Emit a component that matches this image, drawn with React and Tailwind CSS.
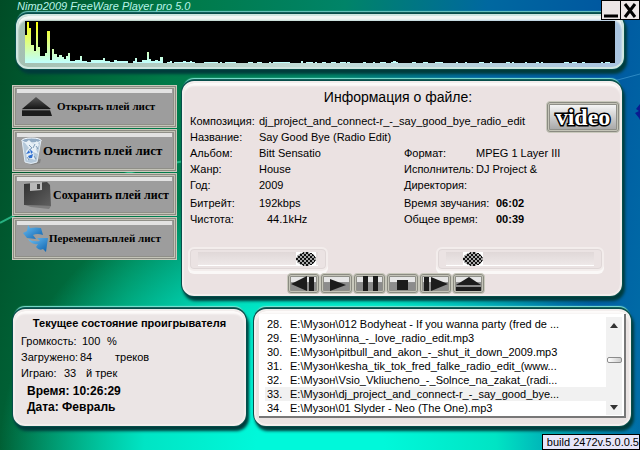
// src/App.jsx
// Nimp2009 audio player skin: spectrum, playlist actions, file info, status and playlist.

import React, { useState } from 'react';

// Spectrum runs as [x, width, height] in pixels of the 590x42 display
const spectrum = [
  [0, 2, 28], [2, 2, 41], [4, 2, 35], [6, 3, 18], [9, 2, 12], [11, 2, 41], [13, 2, 16], [15, 5, 7],
  [20, 2, 10], [22, 3, 32], [25, 2, 3], [27, 2, 14], [29, 3, 9], [32, 2, 6], [34, 3, 8], [37, 2, 6],
  [39, 2, 4], [41, 2, 7], [43, 2, 10], [45, 5, 2], [50, 5, 3], [55, 2, 7], [57, 5, 2], [62, 4, 1],
  [66, 12, 3], [78, 2, 5], [80, 5, 2], [85, 4, 1], [89, 3, 3], [92, 11, 2], [108, 2, 2], [110, 2, 5],
  [112, 5, 1], [117, 5, 3], [122, 2, 11], [124, 2, 4], [126, 4, 2], [130, 3, 3], [133, 2, 2], [135, 3, 6],
  [142, 3, 1], [145, 2, 2], [149, 9, 1], [158, 3, 2], [161, 5, 1], [165, 2, 2], [167, 3, 1], [179, 14, 1],
  [195, 2, 1], [200, 11, 1], [223, 5, 1], [232, 5, 1], [244, 2, 1], [248, 17, 1], [276, 2, 2], [281, 7, 1],
  [290, 2, 1], [297, 4, 1], [306, 5, 1], [315, 6, 1], [322, 3, 1], [338, 3, 1], [348, 2, 1], [355, 6, 1],
  [366, 7, 1], [368, 3, 2], [387, 4, 1], [398, 5, 1], [410, 8, 1], [431, 2, 1], [440, 2, 1], [454, 5, 1],
  [465, 2, 1], [481, 4, 1], [487, 2, 1], [500, 2, 1], [511, 3, 1], [516, 2, 1], [539, 5, 1], [547, 5, 1],
  [557, 3, 1], [576, 2, 1], [580, 5, 1],
];

const trackInfo = [
  ['Композиция:', 'dj_project_and_connect-r_-_say_good_bye_radio_edit'],
  ['Название:', 'Say Good Bye (Radio Edit)'],
  ['Альбом:', 'Bitt Sensatio'],
  ['Жанр:', 'House'],
  ['Год:', '2009'],
];

const formatInfo = [
  ['Формат:', 'MPEG 1 Layer III'],
  ['Исполнитель:', 'DJ Project &'],
  ['Директория:', ''],
];

const playlist = [
  { no: 28, title: 'E:\\Музон\\012 Bodyheat - If you wanna party (fred de ...' },
  { no: 29, title: 'E:\\Музон\\inna_-_love_radio_edit.mp3' },
  { no: 30, title: 'E:\\Музон\\pitbull_and_akon_-_shut_it_down_2009.mp3' },
  { no: 31, title: 'E:\\Музон\\kesha_tik_tok_fred_falke_radio_edit_(www...' },
  { no: 32, title: 'E:\\Музон\\Vsio_Vkliucheno_-_Solnce_na_zakat_(radi...' },
  { no: 33, title: 'E:\\Музон\\dj_project_and_connect-r_-_say_good_bye...' },
  { no: 34, title: 'E:\\Музон\\01 Slyder - Neo (The One).mp3' },
];

// Glossy raised frame shared by every panel
const panelFrame =
  'rounded-xl border-2 border-[#f3eeed] shadow-[inset_0_4px_2px_-1px_#fdfbfa,0_0_0_1px_#064e4a,0_-2px_1px_0_#06504c,0_-4px_1px_-1px_#8ff5e4,2px_4px_3px_1px_#013c3c]';

// Grey double-edged frame for the buttons
const metalFrame =
  'border border-[#c9c9bc] bg-[#9d9d9d] shadow-[inset_0_0_0_1px_#8b8b82,inset_0_0_0_2px_#c4c4b8,inset_0_0_0_3px_#8f8f88]';

function EjectIcon() {
  return (
    <svg width="32" height="20" viewBox="0 0 32 20">
      <defs>
        <linearGradient id="ejectFill" x1="0" y1="0" x2="0" y2="1">
          <stop offset="0" stopColor="#555" />
          <stop offset="1" stopColor="#151515" />
        </linearGradient>
      </defs>
      <path d="M15 0 L30 12 H1 Z" fill="url(#ejectFill)" />
      <path d="M1 13 H29 L31 19 H1 Z" fill="#1c1c1c" />
      <path d="M1 13 H29" stroke="#666" />
    </svg>
  );
}

function BinIcon() {
  return (
    <svg width="22" height="28" viewBox="0 0 22 28">
      <path d="M5 25 L20 22 L19 26 L11 28 Z" fill="#6f6f6f" opacity=".6" />
      <path d="M1 3 L4 25 Q10 28 16 25 L20 3 Z" fill="#b4c8da" stroke="#e3edf5" />
      <ellipse cx="10.500" cy="3.500" rx="9.500" ry="2.500" fill="#8fa9c2" stroke="#f5faff" />
      <path d="M4 6 L8 3 L12 7 L16 4 L18 8 L15 12 L17 17 L12 15 L14 23 L8 21 L6 24 L5 14 L8 11 Z" fill="#e6eff6" />
      <path d="M8 8 L11 11 L8 13 M14 7 L12 11 M6 20 L8 23 M13 19 L15 22 M15 9 L17 12" stroke="#7d9ab6" fill="none" />
      <path d="M5 17 L8 13 L9 16 Z M9 12 L12 15 L10 17 Z M7 19 L12 17 L11 21 L8 21 Z" fill="#2f6fd0" />
    </svg>
  );
}

function FloppyIcon() {
  return (
    <svg width="30" height="28" viewBox="0 0 30 28">
      <defs>
        <linearGradient id="floppyFill" x1="0" y1="0" x2="1" y2="1">
          <stop offset="0" stopColor="#303030" />
          <stop offset="1" stopColor="#606060" />
        </linearGradient>
      </defs>
      <path d="M2 24 L28 25 L26 28 L8 26 Z" fill="#666" opacity=".6" />
      <path d="M1 3 L24 1 L27 4 L28 25 L1 24 Z" fill="url(#floppyFill)" />
      <path d="M7 2 L19 1 V9 L7 10 Z" fill="#b9b9b9" />
      <path d="M14 3 L17 3 V8 L14 8 Z" fill="#3f3f3f" />
    </svg>
  );
}

function ShuffleIcon() {
  return (
    <svg width="26" height="28" viewBox="0 0 26 28">
      <defs>
        <linearGradient id="shuffleFill" x1="0" y1="0" x2="1" y2="1">
          <stop offset="0" stopColor="#6cc0f5" />
          <stop offset="1" stopColor="#0d62ae" />
        </linearGradient>
      </defs>
      <path d="M5 0 L7 3 Q13 2 18 3 L20 10 Q14 8 10 10 L13 14 L4 13 L0 8 L4 6 Z" fill="url(#shuffleFill)" />
      <path d="M25 13 L23 27 L20 24 Q16 26 13 22 L15 19 Q8 20 5 14 Q10 17 17 16 L14 13 Z" fill="url(#shuffleFill)" />
    </svg>
  );
}

// Shapes for the transport bar, all on a 27x15 canvas
const transport = [
  { label: 'Назад', shape: <path d="M17 0 V15 L1 8 Z M19 1 H24 V15 H19 Z" /> },
  { label: 'Играть', shape: <path d="M7 3 L23 9 L7 15 Z" /> },
  { label: 'Пауза', shape: <path d="M7 0 H12 V15 H7 Z M17 0 H22 V15 H17 Z" /> },
  { label: 'Стоп', shape: <path d="M8 4 H19 V14 H8 Z" /> },
  { label: 'Вперёд', shape: <path d="M2 1 H7 V15 H2 Z M9 1 L26 8 L9 15 Z" /> },
  { label: 'Открыть', shape: <path d="M14 1 L26 9 H1 Z M1 11 H26 V15 H1 Z" /> },
];

const actions = [
  { label: 'Открыть плей лист', icon: <EjectIcon />, className: 'gap-1 pl-2 text-[11px]' },
  { label: 'Очистить плей лист', icon: <BinIcon />, className: 'pl-2 text-[13px]' },
  { label: 'Сохранить плей лист', icon: <FloppyIcon />, className: 'pl-2.5 text-xs' },
  { label: 'Перемешатьплей лист', icon: <ShuffleIcon />, className: 'pl-2.5 text-[11px]' },
];

function Slider({ label, defaultValue, className }) {
  return (
    <div className={`flex h-6 items-center rounded-md border-2 border-[#f3edec] bg-[#ebe3e3] px-2 shadow-[inset_0_0_0_1px_#dfd7d7,0_3px_0_0_#faf8f7] ${className}`}>
      <input
        type="range"
        aria-label={label}
        defaultValue={defaultValue}
        className="h-3.5 w-full appearance-none border-b border-white bg-linear-to-b from-[#e0d8d8] to-[#eee8e8] [&::-webkit-slider-thumb]:h-3.5 [&::-webkit-slider-thumb]:w-5 [&::-webkit-slider-thumb]:appearance-none [&::-webkit-slider-thumb]:bg-[radial-gradient(closest-side,transparent_96%,#fff_100%),repeating-conic-gradient(#111_0_25%,#aaa_0_50%)] [&::-webkit-slider-thumb]:bg-[length:100%_100%,4px_4px]"
      />
    </div>
  );
}

function Spectrum() {
  return (
    <section className="mx-4 rounded-xl border-2 border-[#cfe6e0] bg-linear-to-r from-[#a4c0b2] via-[#c2dcd6] to-[#a9c4e0] px-[7px] pt-[5px] pb-1 shadow-[inset_0_4px_2px_#f2f7f5,0_0_0_1px_#064e4a,0_-2px_1px_0_#06504c,0_-4px_1px_-1px_#7fd8d0,2px_4px_3px_1px_#013c3c]">
      <svg className="block h-[42px] w-full bg-black" viewBox="0 0 590 42" preserveAspectRatio="none" shapeRendering="crispEdges">
        <defs>
          <linearGradient id="levels" gradientUnits="userSpaceOnUse" x1="0" y1="0" x2="0" y2="42">
            <stop offset="0" stopColor="#ffff00" />
            <stop offset="1" stopColor="#c0ffff" />
          </linearGradient>
        </defs>
        {spectrum.map(([x, w, h]) => (
          <rect key={x} x={x} y={42 - h} width={w} height={h} fill="url(#levels)" />
        ))}
      </svg>
    </section>
  );
}

function FileInfo() {
  return (
    <section className={`flex min-w-0 flex-1 flex-col bg-[#ebe2e2] ${panelFrame}`}>
      <h2 className="mt-1 pr-2 text-center text-sm leading-5">Информация о файле:</h2>
      <div className="relative flex px-1.5 pt-1.5 text-[11px] leading-4">
        <dl className="grid w-[214px] grid-cols-[69px_1fr] content-start whitespace-nowrap">
          {trackInfo.map(([name, value]) => (
            <React.Fragment key={name}>
              <dt>{name}</dt>
              <dd>{value}</dd>
            </React.Fragment>
          ))}
          <dt className="mt-0.5">Битрейт:</dt>
          <dd className="mt-0.5">192kbps</dd>
          <dt>Чистота:</dt>
          <dd className="pl-2">44.1kHz</dd>
        </dl>
        <div className="pt-8 whitespace-nowrap">
          <dl className="grid grid-cols-[72px_1fr]">
            {formatInfo.map(([name, value]) => (
              <React.Fragment key={name}>
                <dt>{name}</dt>
                <dd>{value}</dd>
              </React.Fragment>
            ))}
          </dl>
          <dl className="mt-0.5 grid grid-cols-[92px_1fr]">
            <dt>Время звучания:</dt>
            <dd className="font-bold">06:02</dd>
            <dt>Общее время:</dt>
            <dd className="font-bold">00:39</dd>
          </dl>
        </div>
        {/* Video button floats over the right edge of the info rows */}
        <button
          type="button"
          className={`absolute -top-1.5 right-0 h-8 w-[74px] rounded-sm bg-linear-to-b from-white to-[#a0a0a0] text-center font-['Liberation_Serif',serif] text-2xl leading-6 font-bold text-white [-webkit-text-stroke:3px_#000] [paint-order:stroke_fill] ${metalFrame}`}
        >
          video
        </button>
      </div>
      <div className="mt-5 flex items-center justify-between pr-4 pl-1">
        <Slider label="Громкость" defaultValue="98" className="w-[140px]" />
        <Slider label="Позиция" defaultValue="13" className="w-[168px]" />
      </div>
      <div className="mt-auto flex justify-center pr-8">
        {transport.map(({ label, shape }) => (
          <button
            key={label}
            type="button"
            aria-label={label}
            className={`flex h-[21px] w-[33px] items-center justify-center rounded-sm bg-linear-to-b from-[#e6e6e6] from-40% to-[#8c8c8c] to-45% ${metalFrame}`}
          >
            <svg width="27" height="15" viewBox="0 0 27 15" fill="#1c1c1c">{shape}</svg>
          </button>
        ))}
      </div>
    </section>
  );
}

function Status() {
  return (
    <section className={`w-[233px] bg-[#ebe5e5] px-1.5 pt-1 pb-2 text-[11px] leading-4 ${panelFrame}`}>
      <h2 className="text-center font-bold">Текущее состояние проигрывателя</h2>
      <p className="mt-0.5 flex"><span className="w-[61px]">Громкость:</span><span className="w-[25px]">100</span>%</p>
      <p className="flex"><span className="w-[59px]">Загружено:</span><span className="w-[35px]">84</span>треков</p>
      <p className="flex"><span className="w-[43px]">Играю:</span><span className="w-[22px]">33</span>й трек</p>
      <p className="mt-0.5 pl-1.5 text-xs leading-4 font-bold">Время: <time>10:26:29</time></p>
      <p className="pl-1.5 text-xs leading-4 font-bold">Дата: Февраль</p>
    </section>
  );
}

function Playlist() {
  const [selected, setSelected] = useState(33);

  return (
    <section className={`min-w-0 flex-1 bg-[#e9e3e2] p-[3px] pb-1.5 ${panelFrame}`}>
      <div className="flex h-full border-r-2 border-b-2 border-[#777] bg-white pt-[3px] pr-0.5 pb-px pl-1.5">
        <ol className="min-w-0 flex-1 text-[11px] leading-[14px]">
          {playlist.map(({ no, title }) => (
            <li
              key={no}
              onClick={() => setSelected(no)}
              className={`flex pl-0.5 whitespace-nowrap ${no === selected ? 'bg-[#f1f1f1]' : ''}`}
            >
              <span className="w-[23px]">{no}.</span>
              <span>{title}</span>
            </li>
          ))}
        </ol>
        <div className="flex w-4 flex-col items-center justify-between bg-[#f1f1f1] py-1">
          <button type="button" aria-label="Вверх" className="flex h-2 w-4 items-center justify-center">
            <svg width="8" height="5" viewBox="0 0 8 5"><path d="M4 0 L8 5 H0 Z" fill="#333" /></svg>
          </button>
          <div className="mb-3 h-1.5 w-[15px] rounded-xs border border-[#8c8c8c] bg-linear-to-r from-white to-[#ccc]" />
          <button type="button" aria-label="Вниз" className="flex h-2 w-4 items-center justify-center">
            <svg width="8" height="5" viewBox="0 0 8 5"><path d="M0 0 H8 L4 5 Z" fill="#333" /></svg>
          </button>
        </div>
      </div>
    </section>
  );
}

// Light streaks and the dark emblem of the wallpaper
function Backdrop() {
  return (
    <svg className="absolute inset-0 -z-10 h-full w-full" viewBox="0 0 640 450" preserveAspectRatio="none" fill="none">
      <path d="M0 223 Q80 178 190 160" stroke="#2fc795" strokeWidth="2" opacity=".8" />
      <path d="M610 82 L640 74" stroke="#3f9ad0" opacity=".7" />
      <path d="M640 104 L636 109 L639 111 L635 113 L639 118 L640 120 Z" fill="#0a1c90" />
    </svg>
  );
}

function App() {
  return (
    <main className="relative isolate flex min-h-screen flex-col overflow-hidden bg-[radial-gradient(ellipse_50%_62%_at_50%_100%,#00f8da_20%,#00e4c4_55%,transparent),linear-gradient(100deg,#004c26,#007a48_25%,#008468_48%,#0068a0_68%,#0057a0_85%,#0070a8)] font-['Liberation_Sans',sans-serif] text-black">
      <Backdrop />
      <h1 className="pb-0.5 pl-[17px] text-[11px] leading-3 text-[#b8f4e8] italic">Nimp2009 FreeWare Player pro 5.0</h1>
      {/* Window controls sit over the corner of the spectrum frame */}
      <div className="absolute top-0 right-0 z-10 flex divide-x divide-black border border-black bg-[#ece6e6]">
        <button type="button" aria-label="Свернуть" className="h-[18px] w-[19px]">
          <svg width="18" height="18" viewBox="0 0 18 18"><path d="M2 15 H16" stroke="#000" strokeWidth="3" /></svg>
        </button>
        <button type="button" aria-label="Закрыть" className="h-[18px] w-[18px]">
          <svg width="18" height="18" viewBox="0 0 18 18"><path d="M4 3 L14 16 M14 3 L4 16" stroke="#000" strokeWidth="3" /></svg>
        </button>
      </div>
      <Spectrum />
      <div className="mt-3 flex gap-[5px] pr-[18px] pl-3">
        <nav className="flex w-[165px] flex-col gap-px pt-1 pb-9">
          {actions.map(({ label, icon, className }) => (
            <button
              key={label}
              type="button"
              className={`flex h-[43px] items-center font-['Liberation_Serif',serif] font-bold whitespace-nowrap ${metalFrame} bg-[linear-gradient(#e2e2e2,#e2e2e2)] bg-[length:155px_4px] bg-[position:4px_3px] bg-no-repeat ${className}`}
            >
              {icon}
              <span>{label}</span>
            </button>
          ))}
        </nav>
        <FileInfo />
      </div>
      <div className="mt-[13px] flex gap-2 pr-[9px] pl-[13px]">
        <Status />
        <Playlist />
      </div>
      <footer className="mt-auto self-end border border-black bg-[#e6e6fa] pl-1 text-[11px] leading-[14px]">
        build 2472v.5.0.0.5
      </footer>
    </main>
  );
}

export default App;
